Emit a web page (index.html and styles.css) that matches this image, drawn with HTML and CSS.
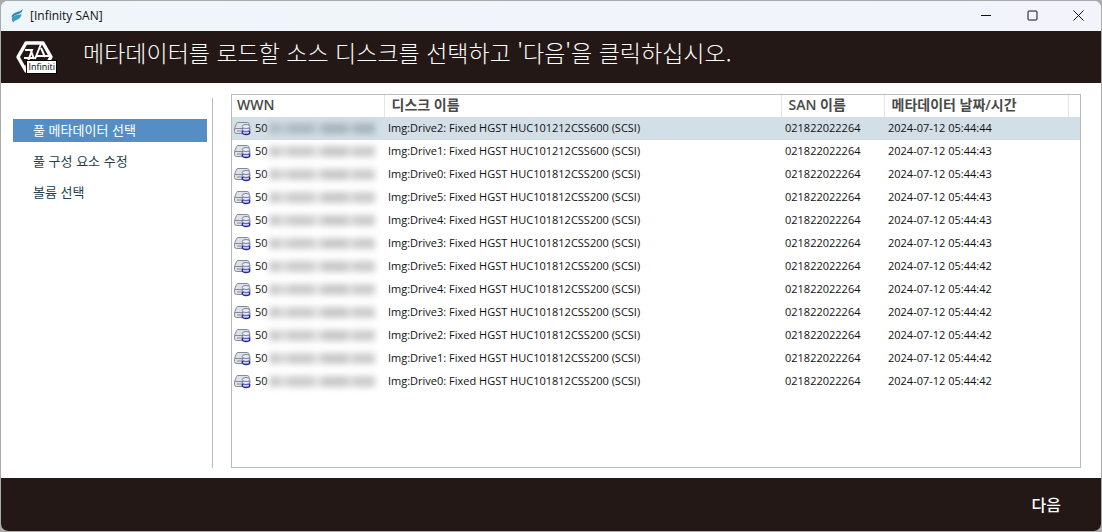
FILE: index.html
```html
<!DOCTYPE html>
<html lang="ko">
<head>
  <meta charset="UTF-8">
  <meta name="viewport" content="width=device-width, initial-scale=1.0">
  <title>[Infinity SAN]</title>
  <link rel="stylesheet" href="styles.css">
</head>
<body>
  <svg width="0" height="0" class="sprite" aria-hidden="true">
    <symbol id="disk" viewBox="0 0 17 15">
      <path d="M4 1.500h9.500q1 0 1.300 1l1 4v4q0 2-2 2H2.500q-2 0-2-2v-3l2-5q.4-1 1.500-1z" fill="#dde1e7" stroke="#858b96"/>
      <path d="M1 7.500h8M3 10h5" stroke="#858b96" fill="none"/>
      <ellipse cx="12" cy="11.500" rx="3.800" ry="2" fill="#c9cdee" stroke="#23239b" stroke-width="1.300"/>
      <ellipse cx="12" cy="8.500" rx="3.800" ry="2" fill="#e3e6f3" stroke="#5a5f94"/>
      <ellipse cx="12" cy="5.500" rx="3.800" ry="2" fill="#eef0f6" stroke="#7c829f"/>
    </symbol>
  </svg>

  <div class="window">
    <div class="titlebar">
      <svg class="app-icon" width="13" height="14" viewBox="0 0 13 14" aria-hidden="true">
        <path d="M11.500 0C10 2 8 2.500 5 3.500 2 4.500 0 6.500 1 9c1-2 3-3 5-3.500C9 4.700 11.500 3.500 11.500 0z" fill="#2d86b0"/>
        <path d="M10.500 4.500C9 6.500 6 5 2 7.500 0 9.500 1 12 2.500 13.500 3 11.500 5.500 11 7.500 10c2-1.100 3-3 3-5.500z" fill="#3d9cc2"/>
      </svg>
      <span class="caption">[Infinity SAN]</span>
      <div class="window-buttons">
        <button type="button" aria-label="최소화"><svg width="11" height="11" viewBox="0 0 11 11"><path d="M0 5.500h10"/></svg></button>
        <button type="button" aria-label="최대화"><svg width="11" height="11" viewBox="0 0 11 11"><rect x="1" y="1" width="9" height="9" rx="1"/></svg></button>
        <button type="button" aria-label="닫기"><svg width="11" height="11" viewBox="0 0 11 11"><path d="M.5.5l10 10M10.500.5l-10 10"/></svg></button>
      </div>
    </div>

    <header class="banner">
      <div class="logo">
        <svg width="40" height="36" viewBox="0 0 40 36" aria-hidden="true">
          <path d="M11 4h17l8 14-8 14H11L3 18z" fill="none" stroke="#fff" stroke-width="3.500" stroke-linejoin="round"/>
          <path d="M10 11h7l-6 17M16 12l3 8M9 19h10M26 5l-6 15M26 9l4 9M22 17h14" fill="none" stroke="#fff" stroke-width="2"/>
        </svg>
        <span class="logo-label">Infiniti</span>
      </div>
      <h1>메타데이터를 로드할 소스 디스크를 선택하고 '다음'을 클릭하십시오.</h1>
    </header>

    <main class="content">
      <nav class="steps">
        <a href="#" class="active">풀 메타데이터 선택</a>
        <a href="#">풀 구성 요소 수정</a>
        <a href="#">볼륨 선택</a>
      </nav>

      <div class="list">
        <table>
          <colgroup>
            <col class="col-wwn">
            <col>
            <col class="col-san">
            <col class="col-date">
            <col class="col-end">
          </colgroup>
          <thead>
            <tr><th>WWN</th><th>디스크 이름</th><th>SAN 이름</th><th>메타데이터 날짜/시간</th><td></td></tr>
          </thead>
          <tbody>
            <tr class="selected"><td><div class="wwn"><svg width="17" height="15"><use href="#disk"/></svg>50<span class="masked"></span></div></td><td>Img:Drive2: Fixed HGST HUC101212CSS600 (SCSI)</td><td>021822022264</td><td>2024-07-12 05:44:44</td><td></td></tr>
            <tr><td><div class="wwn"><svg width="17" height="15"><use href="#disk"/></svg>50<span class="masked"></span></div></td><td>Img:Drive1: Fixed HGST HUC101212CSS600 (SCSI)</td><td>021822022264</td><td>2024-07-12 05:44:43</td><td></td></tr>
            <tr><td><div class="wwn"><svg width="17" height="15"><use href="#disk"/></svg>50<span class="masked"></span></div></td><td>Img:Drive0: Fixed HGST HUC101812CSS200 (SCSI)</td><td>021822022264</td><td>2024-07-12 05:44:43</td><td></td></tr>
            <tr><td><div class="wwn"><svg width="17" height="15"><use href="#disk"/></svg>50<span class="masked"></span></div></td><td>Img:Drive5: Fixed HGST HUC101812CSS200 (SCSI)</td><td>021822022264</td><td>2024-07-12 05:44:43</td><td></td></tr>
            <tr><td><div class="wwn"><svg width="17" height="15"><use href="#disk"/></svg>50<span class="masked"></span></div></td><td>Img:Drive4: Fixed HGST HUC101812CSS200 (SCSI)</td><td>021822022264</td><td>2024-07-12 05:44:43</td><td></td></tr>
            <tr><td><div class="wwn"><svg width="17" height="15"><use href="#disk"/></svg>50<span class="masked"></span></div></td><td>Img:Drive3: Fixed HGST HUC101812CSS200 (SCSI)</td><td>021822022264</td><td>2024-07-12 05:44:43</td><td></td></tr>
            <tr><td><div class="wwn"><svg width="17" height="15"><use href="#disk"/></svg>50<span class="masked"></span></div></td><td>Img:Drive5: Fixed HGST HUC101812CSS200 (SCSI)</td><td>021822022264</td><td>2024-07-12 05:44:42</td><td></td></tr>
            <tr><td><div class="wwn"><svg width="17" height="15"><use href="#disk"/></svg>50<span class="masked"></span></div></td><td>Img:Drive4: Fixed HGST HUC101812CSS200 (SCSI)</td><td>021822022264</td><td>2024-07-12 05:44:42</td><td></td></tr>
            <tr><td><div class="wwn"><svg width="17" height="15"><use href="#disk"/></svg>50<span class="masked"></span></div></td><td>Img:Drive3: Fixed HGST HUC101812CSS200 (SCSI)</td><td>021822022264</td><td>2024-07-12 05:44:42</td><td></td></tr>
            <tr><td><div class="wwn"><svg width="17" height="15"><use href="#disk"/></svg>50<span class="masked"></span></div></td><td>Img:Drive2: Fixed HGST HUC101812CSS200 (SCSI)</td><td>021822022264</td><td>2024-07-12 05:44:42</td><td></td></tr>
            <tr><td><div class="wwn"><svg width="17" height="15"><use href="#disk"/></svg>50<span class="masked"></span></div></td><td>Img:Drive1: Fixed HGST HUC101812CSS200 (SCSI)</td><td>021822022264</td><td>2024-07-12 05:44:42</td><td></td></tr>
            <tr><td><div class="wwn"><svg width="17" height="15"><use href="#disk"/></svg>50<span class="masked"></span></div></td><td>Img:Drive0: Fixed HGST HUC101812CSS200 (SCSI)</td><td>021822022264</td><td>2024-07-12 05:44:42</td><td></td></tr>
          </tbody>
        </table>
      </div>
    </main>

    <footer class="footer">
      <button type="button" class="next">다음</button>
    </footer>
  </div>
</body>
</html>
```
FILE: styles.css
```css
* {
  box-sizing: border-box;
}

body {
  margin: 0;
  background-color: #a9abad;
  font-family: "Open Sans", "Noto Sans CJK KR", sans-serif;
  color: #111;
}

.sprite {
  position: absolute;
}

.window {
  display: flex;
  flex-direction: column;
  min-height: 100vh;
  border: 1px solid #a9abad;
  border-radius: 8px;
  background-color: #fff;
  overflow: hidden;
}

/* Title bar */
.titlebar {
  display: flex;
  align-items: center;
  height: 30px;
  padding-left: 10px;
  background: linear-gradient(to right, #eff6fa, #f2f3fb);
}

.caption {
  margin-left: 6px;
  font-size: 12px;
  line-height: 16px;
}

.window-buttons {
  display: flex;
  margin-left: auto;
}

.window-buttons button {
  display: flex;
  align-items: center;
  justify-content: center;
  width: 46px;
  height: 30px;
  padding: 0 0 2px;
  border: none;
  background: none;
}

.window-buttons svg {
  fill: none;
  stroke: #111;
}

/* Banner */
.banner {
  display: flex;
  align-items: center;
  height: 52px;
  padding-left: 14px;
  background-color: #231815;
  color: #fff;
}

.logo {
  position: relative;
  width: 42px;
  height: 36px;
}

.logo-label {
  position: absolute;
  right: 0;
  bottom: 1px;
  padding: 0 1px;
  border: 1px solid #000;
  background-color: #fff;
  color: #000;
  font-size: 9px;
  line-height: 12px;
}

.banner h1 {
  margin: 0 0 10px 26px;
  font-family: "Noto Sans CJK KR", sans-serif;
  font-size: 23px;
  font-weight: 300;
  line-height: 30px;
}

/* Content */
.content {
  display: flex;
  flex: 1;
  padding: 11px 20px 10px 12px;
}

.steps {
  display: flex;
  flex-direction: column;
  gap: 8px;
  width: 200px;
  margin-top: 4px;
  padding: 21px 5px 0 0;
  border-right: 1px solid #bbb;
}

.steps a {
  padding: 0 0 2px 20px;
  color: #1f3f4d;
  font-family: "Noto Sans CJK KR", sans-serif;
  font-size: 13px;
  line-height: 21px;
  text-decoration: none;
}

.steps a.active {
  background-color: #558ec5;
  color: #fff;
}

.list {
  flex: 1;
  margin-left: 18px;
  border: 1px solid #bbb;
}

table {
  width: 100%;
  border-collapse: collapse;
  table-layout: fixed;
}

.col-wwn {
  width: 152px;
}

.col-san {
  width: 103px;
}

.col-date {
  width: 184px;
}

.col-end {
  width: 12px;
}

thead tr {
  height: 22px;
}

th {
  padding: 0 0 3px 7px;
  border-right: 1px solid #e4e4e4;
  color: #4a4a4a;
  font-size: 14px;
  font-weight: 600;
  line-height: 18px;
  text-align: left;
  white-space: nowrap;
}

th:first-child {
  padding-left: 5px;
}

tbody tr {
  height: 23px;
}

tbody td {
  padding: 0 0 1px 4px;
  font-size: 11px;
  line-height: 20px;
  white-space: nowrap;
}

tbody td:first-child {
  padding-left: 2px;
}

tr.selected {
  background-color: #d3dfe6;
}

.wwn {
  display: flex;
  align-items: center;
}

.wwn svg {
  margin-right: 4px;
}

/* Hidden part of the WWN */
.masked {
  width: 106px;
  height: 11px;
  margin-left: 1px;
  background: linear-gradient(to right, #ccc 0 8%, #ddd 12% 16%, #ccc 20% 40%, #e2e2e2 44% 48%, #c8c8c8 52% 72%, #ddd 75% 78%, #ccc 82%);
  filter: blur(3px);
}

.selected .masked {
  background: linear-gradient(to right, #b2bcc3 0 8%, #bfcad1 12% 16%, #aeb9c0 20% 40%, #c2cdd4 44% 48%, #a9b4bb 52% 72%, #bfcad1 75% 78%, #a9b4bb 82%);
}

/* Footer */
.footer {
  display: flex;
  align-items: center;
  justify-content: flex-end;
  height: 53px;
  padding: 0 40px 2px 0;
  background-color: #231815;
}

.next {
  padding: 0;
  border: none;
  background: none;
  color: #fff;
  font-family: "Noto Sans CJK KR", sans-serif;
  font-size: 16px;
  font-weight: 500;
}
```
